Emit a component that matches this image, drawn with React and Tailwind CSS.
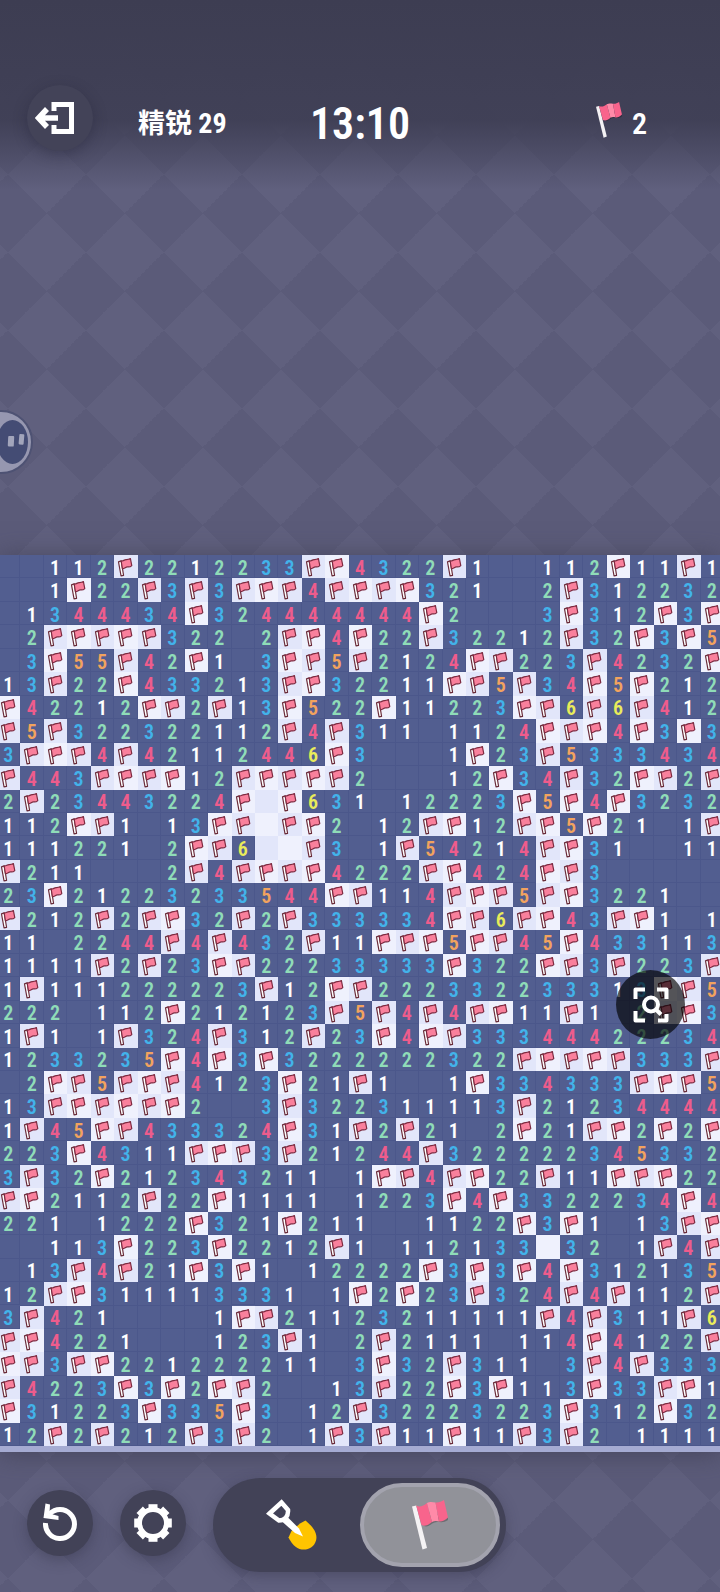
import React from "react";

const ROWS = [
  "..112F2212233FF4322F1..112F11F1",
  "..1F22F3F3FFF4FFFF321..2F312232",
  ".1344434F324444444F2...3F312F3F",
  ".2FFFFF322.2FF4F22F32212F32F3F5",
  ".3F55F42F1.3FF5F2124FF223F4232F",
  "13F22F433213FF32211FF5F34F5F212",
  "F42212FF2F13F522F11223FF6F6F412",
  "F5F322322112F4F311.1124FFF4F3F3",
  "3FFF4F42112446F3...1F23F5333434",
  "F443FFFF12FFFFF2...12F34F32FF2F",
  "2F23443224F#F631.12223F5F4F3232",
  "112FF1.13FF#FF2.12FF12FF5F21.1F",
  "111221.2FF6##F3.1F54214FF31..11",
  "F211...2F4FFFF4222FF424FF3.....",
  "23F21223233544FF114FFF5FF3221..",
  "F212F2FF32F2F333334FF6FF43FF1.1",
  "11.2244F4F432F11FFF5FF45F433113",
  "1111F2F23FF22233333F322FF3F223F",
  "1F111222223F12FF222332233313FF5",
  "222.112F212123F5F4F4FF11F1.2FF3",
  "1F1.1F324F312F23F4FF33344422234",
  "1233235F4F3F3222222322FFFFF333F",
  ".2FF5FFF4123F21F1..1F334333FFF5",
  "13FFFFFF2..3F322311113F21234444",
  "1F45FF433324F31F2F21.2F21FF2F2F",
  "223F4311FFF3F21244F322222345332",
  "3F32F212343211.1FF4FF22F11FFF22",
  "FF2112F22F1111.1223F4F3322234F4",
  "221.1222F321F211..1122F3F1.13FF",
  "..113F223F2212F1.112133#32.1F4F",
  ".13F4F21F3F1.12222F3F3F4F312135",
  "12FF311113331.1F2F23F324F4F112F",
  "3F421....1FF21123211111F4F311F6",
  "FF4221...123F1.2F2111.114F4122F",
  "FF3FF221222211.3F32F311.3F4F333",
  "F4223F3F2FF2..13F22F3F113F33FF1",
  "F31223F335F3.12F32223223F312F32",
  "12F2F212F3F2.1F3F11F11F3F2.1111",
];

const DIGIT = {
  1: "text-white",
  2: "text-[#8fdcb8]",
  3: "text-[#42b3ea]",
  4: "text-[#ee5c8c]",
  5: "text-[#f2a35e]",
  6: "text-[#e9ec5a]",
};

const NUM = "font-['Roboto_Condensed','Liberation_Sans_Narrow','Roboto','Noto_Sans_CJK_SC',sans-serif]";

function CellFlag() {
  return (
    <svg viewBox="0 0 24 24" className="block w-full" aria-hidden="true">
      <path d="M4.600 7 7.400 6 9.800 20.800 7.200 21.400Z" fill="#fff" stroke="#6a2c3a" strokeWidth="1.200" strokeLinejoin="round" />
      <path d="M7.300 6C9 6.800 10.500 4.600 12.500 4.700 14.400 4.800 15.400 4.400 16.800 3.600L18.200 10.800C16.800 12.200 15.200 12.300 13.800 12.100 12 11.900 10.800 14.200 8.600 14Z" fill="#f9809c" stroke="#7d2a40" strokeWidth="1.200" strokeLinejoin="round" />
    </svg>
  );
}

function BigFlag({ className }) {
  return (
    <svg viewBox="0 0 36 50" className={className} aria-hidden="true">
      <path d="M6 8 12 26C17 28 20 22 25 22 29 22 32 23 36 20V17Z" fill="#000" opacity=".25" />
      <path d="M0 6.500 4.200 5.500 15 48 10.500 49.500Z" fill="#f4f2f4" />
      <path d="M4.200 5.500C8 7.500 11 6 15 3L20 22C16 25.500 13 26.500 9.500 25Z" fill="#f8648c" />
      <path d="M15 3C18 1.500 20 2 23.500 2.500L27 21.500C24 20.500 22 21 20 22Z" fill="#ff8aa8" />
      <path d="M23.500 2.500C27 3 29 1.500 32 0L36 17.500C33 20.500 30 21.800 27 21.500Z" fill="#f8648c" />
    </svg>
  );
}

function Cell({ value, odd }) {
  const covered = odd ? "bg-[#e2e6fa]" : "bg-[#eff1fd]";
  if (value === "F") {
    return (
      <button type="button" aria-label="旗子" className={`block aspect-square ${covered}`}>
        <CellFlag />
      </button>
    );
  }
  if (value === "#") {
    return <button type="button" aria-label="未翻开" className={`block aspect-square ${covered}`} />;
  }
  return (
    <div className="flex aspect-square min-h-0 items-center justify-center border-r border-b border-[#4b578b] bg-[#525e90]">
      {value !== "." && <span className={`pt-[3px] text-[20px] leading-6 font-semibold ${DIGIT[value]}`}>{value}</span>}
    </div>
  );
}

function RoundButton({ label, children, className = "" }) {
  return (
    <button
      type="button"
      aria-label={label}
      className={`flex size-[66px] shrink-0 items-center justify-center rounded-full ${className}`}
    >
      {children}
    </button>
  );
}

export default function App() {
  return (
    <div
      className={`relative flex min-h-screen flex-col overflow-hidden bg-[#60607e] bg-[linear-gradient(45deg,#5b5b79_25%,transparent_25%,transparent_75%,#5b5b79_75%),linear-gradient(-45deg,#5b5b79_25%,transparent_25%,transparent_75%,#5b5b79_75%)] bg-size-[78px_78px] bg-position-[8px_57px] ${NUM}`}
    >
      <header className="grid h-[200px] grid-cols-[1fr_auto_1fr] items-center bg-linear-to-b from-[#3d3d52] from-0% via-[#3f3f55]/95 via-60% to-transparent to-95% px-[27px] pt-[36px] text-white">
        <div className="flex items-center gap-[45px]">
          <RoundButton label="退出" className="bg-[#434358] pr-[11px] shadow-[0_4px_14px_rgba(30,30,50,0.35)]">
            <svg viewBox="0 0 40 34" className="h-[34px] w-10" aria-hidden="true">
              <path d="M19 10V3.500H36.500V30.500H19V24" fill="none" stroke="#fff" strokeWidth="5" />
              <path d="M23 17H4M12 8 3.500 17 12 26" fill="none" stroke="#fff" strokeWidth="5.500" />
            </svg>
          </RoundButton>
          <h1 className="pt-3 text-[27px] leading-8 font-bold whitespace-nowrap">
            精锐 <span className="text-[28px]">29</span>
          </h1>
        </div>
        <time className="pt-3 text-[44px] leading-[56px] font-semibold">13:10</time>
        <div className="flex items-center justify-end gap-[10px] pt-1 pr-[46px]">
          <BigFlag className="h-9 w-[26px]" />
          <span className="pt-2 text-[30px] leading-9 font-semibold">2</span>
        </div>
      </header>

      <main className="mt-[355px]">
        <div className="border-b-[6px] border-[#a5abd2] bg-[#525e90] shadow-[0_2px_24px_rgba(60,60,80,0.7)]">
          <div className="-mr-1 -ml-[3px] grid grid-cols-[repeat(31,minmax(0,1fr))]">
            {ROWS.map((row, r) =>
              row.split("").map((v, c) => <Cell key={`${r}-${c}`} value={v} odd={(r + c) % 2 === 1} />)
            )}
          </div>
        </div>
      </main>

      <footer className="flex items-center gap-[27px] px-[27px] pt-[26px] pb-5">
        <RoundButton label="重来" className="mb-1 bg-[#424257] shadow-[0_4px_14px_rgba(40,40,60,0.35)]">
          <svg viewBox="0 0 40 40" className="size-10" aria-hidden="true">
            <path d="M5.500 20A14.500 14.500 0 1 0 20 6.500C16 6.500 12.500 8 9.500 11" fill="none" stroke="#fff" strokeWidth="5" />
            <path d="M5.500 0.500 10 1.500 9.500 10.500 18.500 13V17L3.500 15Z" fill="#fff" />
          </svg>
        </RoundButton>
        <RoundButton label="设置" className="mb-1 bg-[#424257] shadow-[0_4px_14px_rgba(40,40,60,0.35)]">
          <svg viewBox="-20 -20 40 40" className="size-10" aria-hidden="true">
            <circle r="13.500" fill="none" stroke="#fff" strokeWidth="5" />
            {[0, 45, 90, 135, 180, 225, 270, 315].map((a) => (
              <path key={a} d="M-4.500 -13V-18.800H4.500V-13Z" fill="#fff" transform={`rotate(${a})`} />
            ))}
          </svg>
        </RoundButton>
        <div className="flex h-[94px] items-center rounded-full bg-[#424257] p-[6px] shadow-[0_4px_14px_rgba(40,40,60,0.35)]">
          <button type="button" aria-label="挖开" className="flex h-full w-[141px] items-center justify-center pl-[5px]">
            <svg viewBox="0 0 52 52" className="size-[52px]" aria-hidden="true">
              <path d="M34 24.500 39.500 21.500C46 27 52 33.500 50 41.500 48 49 40.500 52 33.500 50 27.500 47.500 25 43 22.500 38.500L25.500 32Z" fill="#ffc400" />
              <path d="M3.500 14.500 15.500 3.500 22 11C22.500 17.500 18.500 21.500 13 21.500Z" fill="none" stroke="#fff" strokeWidth="4.500" strokeLinejoin="miter" />
              <path d="M16 22.500 21 17.500 33 29.500 37 37.500 29 34Z" fill="#fff" />
            </svg>
          </button>
          <button
            type="button"
            aria-label="插旗"
            aria-pressed="true"
            className="flex h-[84px] w-[140px] items-center justify-center rounded-full border-4 border-[#a3a3ae] bg-[#919299]"
          >
            <BigFlag className="h-[50px] w-9" />
          </button>
        </div>
      </footer>

      <button type="button" aria-label="悬浮球" className="absolute top-[410px] -left-[31px] size-16 rounded-full border-2 border-[#4e5273] bg-[#9697b0]">
        <svg viewBox="0 0 60 60" className="size-[60px]" aria-hidden="true">
          <ellipse cx="41.500" cy="30" rx="15.500" ry="22" fill="#444c74" />
          <rect x="37" y="24" width="6" height="10.500" rx="1" fill="#a2a5bb" transform="rotate(3 40 29)" />
          <rect x="48" y="22" width="5" height="10.500" rx="1" fill="#a2a5bb" transform="rotate(5 50 27)" />
        </svg>
      </button>

      <button type="button" aria-label="识图" className="absolute top-[970px] right-[35px] flex size-[69px] items-center justify-center rounded-full bg-black/65">
        <svg viewBox="0 0 36 36" className="size-9" fill="none" stroke="#fff" strokeWidth="4" aria-hidden="true">
          <path d="M2.500 12V2.500H12M24 2.500H33.500V12M33.500 27V33.500H25M12 33.500H2.500V24" strokeLinejoin="round" />
          <circle cx="18" cy="17.500" r="7" />
          <path d="M23 22.500 28 27.500" />
        </svg>
      </button>
    </div>
  );
}
